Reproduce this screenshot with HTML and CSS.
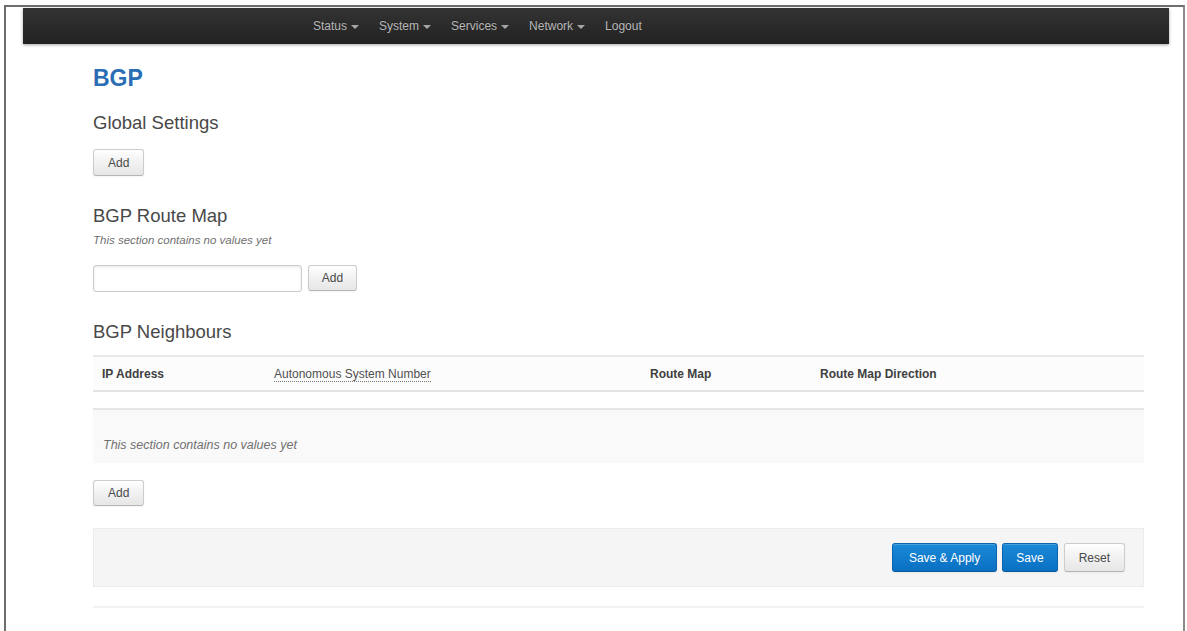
FILE: index.html
```html
<!DOCTYPE html>
<html lang="en">
<head>
    <meta charset="UTF-8">
    <meta name="viewport" content="width=device-width, initial-scale=1.0">
    <title>BGP</title>
    <link rel="stylesheet" href="styles.css">
</head>
<body>
    <div class="frame">
        <div class="navbar">
            <ul class="nav">
                <li><a href="#">Status<span class="caret"></span></a></li>
                <li><a href="#">System<span class="caret"></span></a></li>
                <li><a href="#">Services<span class="caret"></span></a></li>
                <li><a href="#">Network<span class="caret"></span></a></li>
                <li><a href="#">Logout</a></li>
            </ul>
        </div>

        <div class="main">
            <h2 class="page-title">BGP</h2>

            <h3 class="section-title first">Global Settings</h3>
            <button type="button" class="cbi-button add-global">Add</button>

            <h3 class="section-title">BGP Route Map</h3>
            <p class="empty-note">This section contains no values yet</p>
            <div class="create-row">
                <input type="text" class="name-input">
                <button type="button" class="cbi-button">Add</button>
            </div>

            <h3 class="section-title">BGP Neighbours</h3>
            <div class="cbi-table">
                <div class="table-head">
                    <div class="th">IP Address</div>
                    <div class="th"><span class="hint">Autonomous System Number</span></div>
                    <div class="th">Route Map</div>
                    <div class="th">Route Map Direction</div>
                </div>
                <div class="table-spacer"></div>
                <div class="table-empty">This section contains no values yet</div>
            </div>
            <button type="button" class="cbi-button add-neighbour">Add</button>

            <div class="page-actions">
                <button type="button" class="cbi-button primary apply">Save &amp; Apply</button>
                <button type="button" class="cbi-button primary">Save</button>
                <button type="button" class="cbi-button reset">Reset</button>
            </div>
            <div class="footer-line"></div>
        </div>
    </div>
</body>
</html>
```

FILE: styles.css
```css
body {
    margin: 5px 2px 0 4px;
    font-family: "Liberation Sans", Arial, sans-serif;
    color: #404040;
    background: #fff;
}
.frame {
    height: 640px;
    padding-top: 1px;
    border: 2px solid #6e6e6e;
    border-bottom: none;
    border-right-color: #8a8a8a;
}

/* top menu */
.navbar {
    margin: 0 14px 0 17px;
    height: 36px;
    padding-left: 280px;
    background: linear-gradient(#333, #222);
    box-shadow: 0 1px 3px rgba(0, 0, 0, 0.35);
    display: flex;
    align-items: center;
}
.nav {
    display: flex;
    list-style: none;
    margin: 0;
    padding: 0;
}
.nav a {
    display: flex;
    align-items: center;
    padding: 0 10px;
    font-size: 12px;
    color: #b8b8b8;
    text-decoration: none;
    text-shadow: 0 -1px 0 rgba(0, 0, 0, 0.3);
}
.caret {
    margin-left: 4px;
    margin-top: 1px;
    border-top: 4px solid #a5a5a5;
    border-left: 4px solid transparent;
    border-right: 4px solid transparent;
}

/* content */
.main {
    margin: 0 39px 0 87px;
}
.page-title {
    margin: 20px 0 0;
    font-size: 23px;
    line-height: 28px;
    font-weight: bold;
    color: #2a6db5;
}
.section-title {
    margin: 29px 0 0;
    font-size: 18.5px;
    line-height: 22px;
    font-weight: normal;
    color: #484848;
}
.section-title.first {
    margin-top: 20px;
}
.empty-note {
    margin: 5px 0 0;
    font-size: 11.5px;
    line-height: 16px;
    font-style: italic;
    color: #707070;
}

.cbi-button {
    height: 27px;
    padding: 0 14px;
    font-family: inherit;
    font-size: 12px;
    color: #4a4a4a;
    background: linear-gradient(#fff, #f6f6f6 30%, #e6e6e6);
    border: 1px solid #ccc;
    border-bottom-color: #b5b5b5;
    border-radius: 3px;
    box-shadow: inset 0 1px 0 rgba(255, 255, 255, 0.2), 0 1px 2px rgba(0, 0, 0, 0.05);
    cursor: pointer;
}
.add-global {
    display: block;
    margin-top: 15px;
}
.create-row {
    display: flex;
    gap: 6px;
    margin-top: 17px;
}
.name-input {
    width: 209px;
    height: 27px;
    box-sizing: border-box;
    border: 1px solid #ccc;
    border-radius: 3px;
    box-shadow: inset 0 1px 3px rgba(0, 0, 0, 0.1);
}
.create-row .cbi-button {
    width: 49px;
    padding: 0;
    height: 26px;
}

.cbi-table {
    margin-top: 12px;
}
.table-head {
    display: grid;
    grid-template-columns: 172px 376px 170px 1fr;
    height: 33px;
    align-items: center;
    border-top: 2px solid #e8e8e8;
    border-bottom: 2px solid #e4e4e4;
    background: #fcfcfc;
}
.th {
    padding-left: 9px;
    font-size: 12px;
    font-weight: bold;
    color: #404040;
}
.hint {
    font-weight: normal;
    color: #505050;
    border-bottom: 1px dotted #777;
}
.table-spacer {
    height: 16px;
    border-bottom: 2px solid #e6e6e6;
}
.table-empty {
    padding: 27px 10px 10px;
    background: #f9f9f9;
    font-size: 12.5px;
    line-height: 16px;
    font-style: italic;
    color: #707070;
}
.add-neighbour {
    display: block;
    margin-top: 17px;
    height: 26px;
}

.page-actions {
    display: flex;
    justify-content: flex-end;
    gap: 5px;
    margin-top: 22px;
    padding: 14px 18px 14px 20px;
    background: #f5f5f5;
    border: 1px solid #ececec;
}
.page-actions .cbi-button {
    height: 29px;
    padding: 0 13px;
}
.page-actions .apply {
    padding: 0 16px;
}
.page-actions .reset {
    margin-left: 1px;
    padding: 0 14px;
}
.cbi-button.primary {
    color: #fff;
    background: linear-gradient(#1a8ad8, #0a6fc2);
    border-color: #0b64ad;
    border-bottom-color: #08589a;
}
.footer-line {
    margin-top: 19px;
    border-top: 2px solid #f2f2f2;
}
```
